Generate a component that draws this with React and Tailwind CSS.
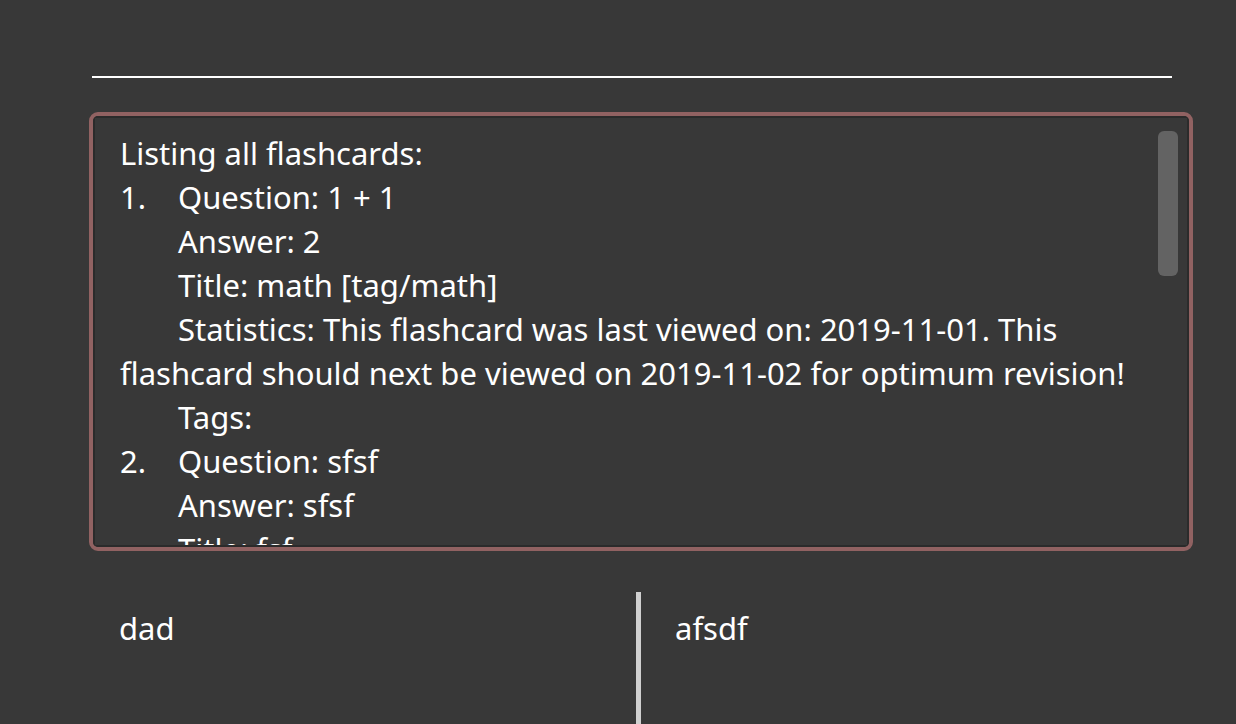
import React from "react";

const font = { fontFamily: '"Noto Sans", "Open Sans", sans-serif' };

function Line({ num, indent, children }) {
  return (
    <div className="flex whitespace-nowrap">
      {num !== undefined ? (
        <span className="w-[58px] shrink-0">{num}</span>
      ) : indent ? (
        <span className="w-[58px] shrink-0" />
      ) : null}
      <span>{children}</span>
    </div>
  );
}

export default function App() {
  return (
    <div
      className="w-[1236px] h-[724px] bg-[#383838] text-white overflow-hidden flex flex-col"
      style={font}
    >
      <div className="mt-[76px] ml-[92px] w-[1080px] h-[2px] bg-white" />
      <div className="mt-[34px] ml-[89px] w-[1104px] h-[439px] border-4 border-[#916262] rounded-[9px] overflow-hidden">
        <div className="relative w-full h-full border-2 border-[#2b2b2b] overflow-hidden">
          <div className="pl-[25px] pt-[13px] text-[31px] leading-[44px]">
            <Line>Listing all flashcards:</Line>
            <Line num="1.">Question: 1 + 1</Line>
            <Line indent>Answer: 2</Line>
            <Line indent>Title: math [tag/math]</Line>
            <Line indent>Statistics: This flashcard was last viewed on: 2019-11-01. This</Line>
            <Line>flashcard should next be viewed on 2019-11-02 for optimum revision!</Line>
            <Line indent>Tags:</Line>
            <Line num="2.">Question: sfsf</Line>
            <Line indent>Answer: sfsf</Line>
            <Line indent>Title: fsf</Line>
          </div>
          <div className="absolute right-[9px] top-[13px] w-[20px] h-[145px] rounded-[6px] bg-[#636363]" />
        </div>
      </div>
      <div className="flex mt-[41px] flex-1">
        <div className="w-[636px] pl-[119px] pt-[14px] text-[31px] leading-[44px]">dad</div>
        <div className="w-[5px] bg-[#d0d0d0]" />
        <div className="pl-[34px] pt-[14px] text-[31px] leading-[44px]">afsdf</div>
      </div>
    </div>
  );
}
